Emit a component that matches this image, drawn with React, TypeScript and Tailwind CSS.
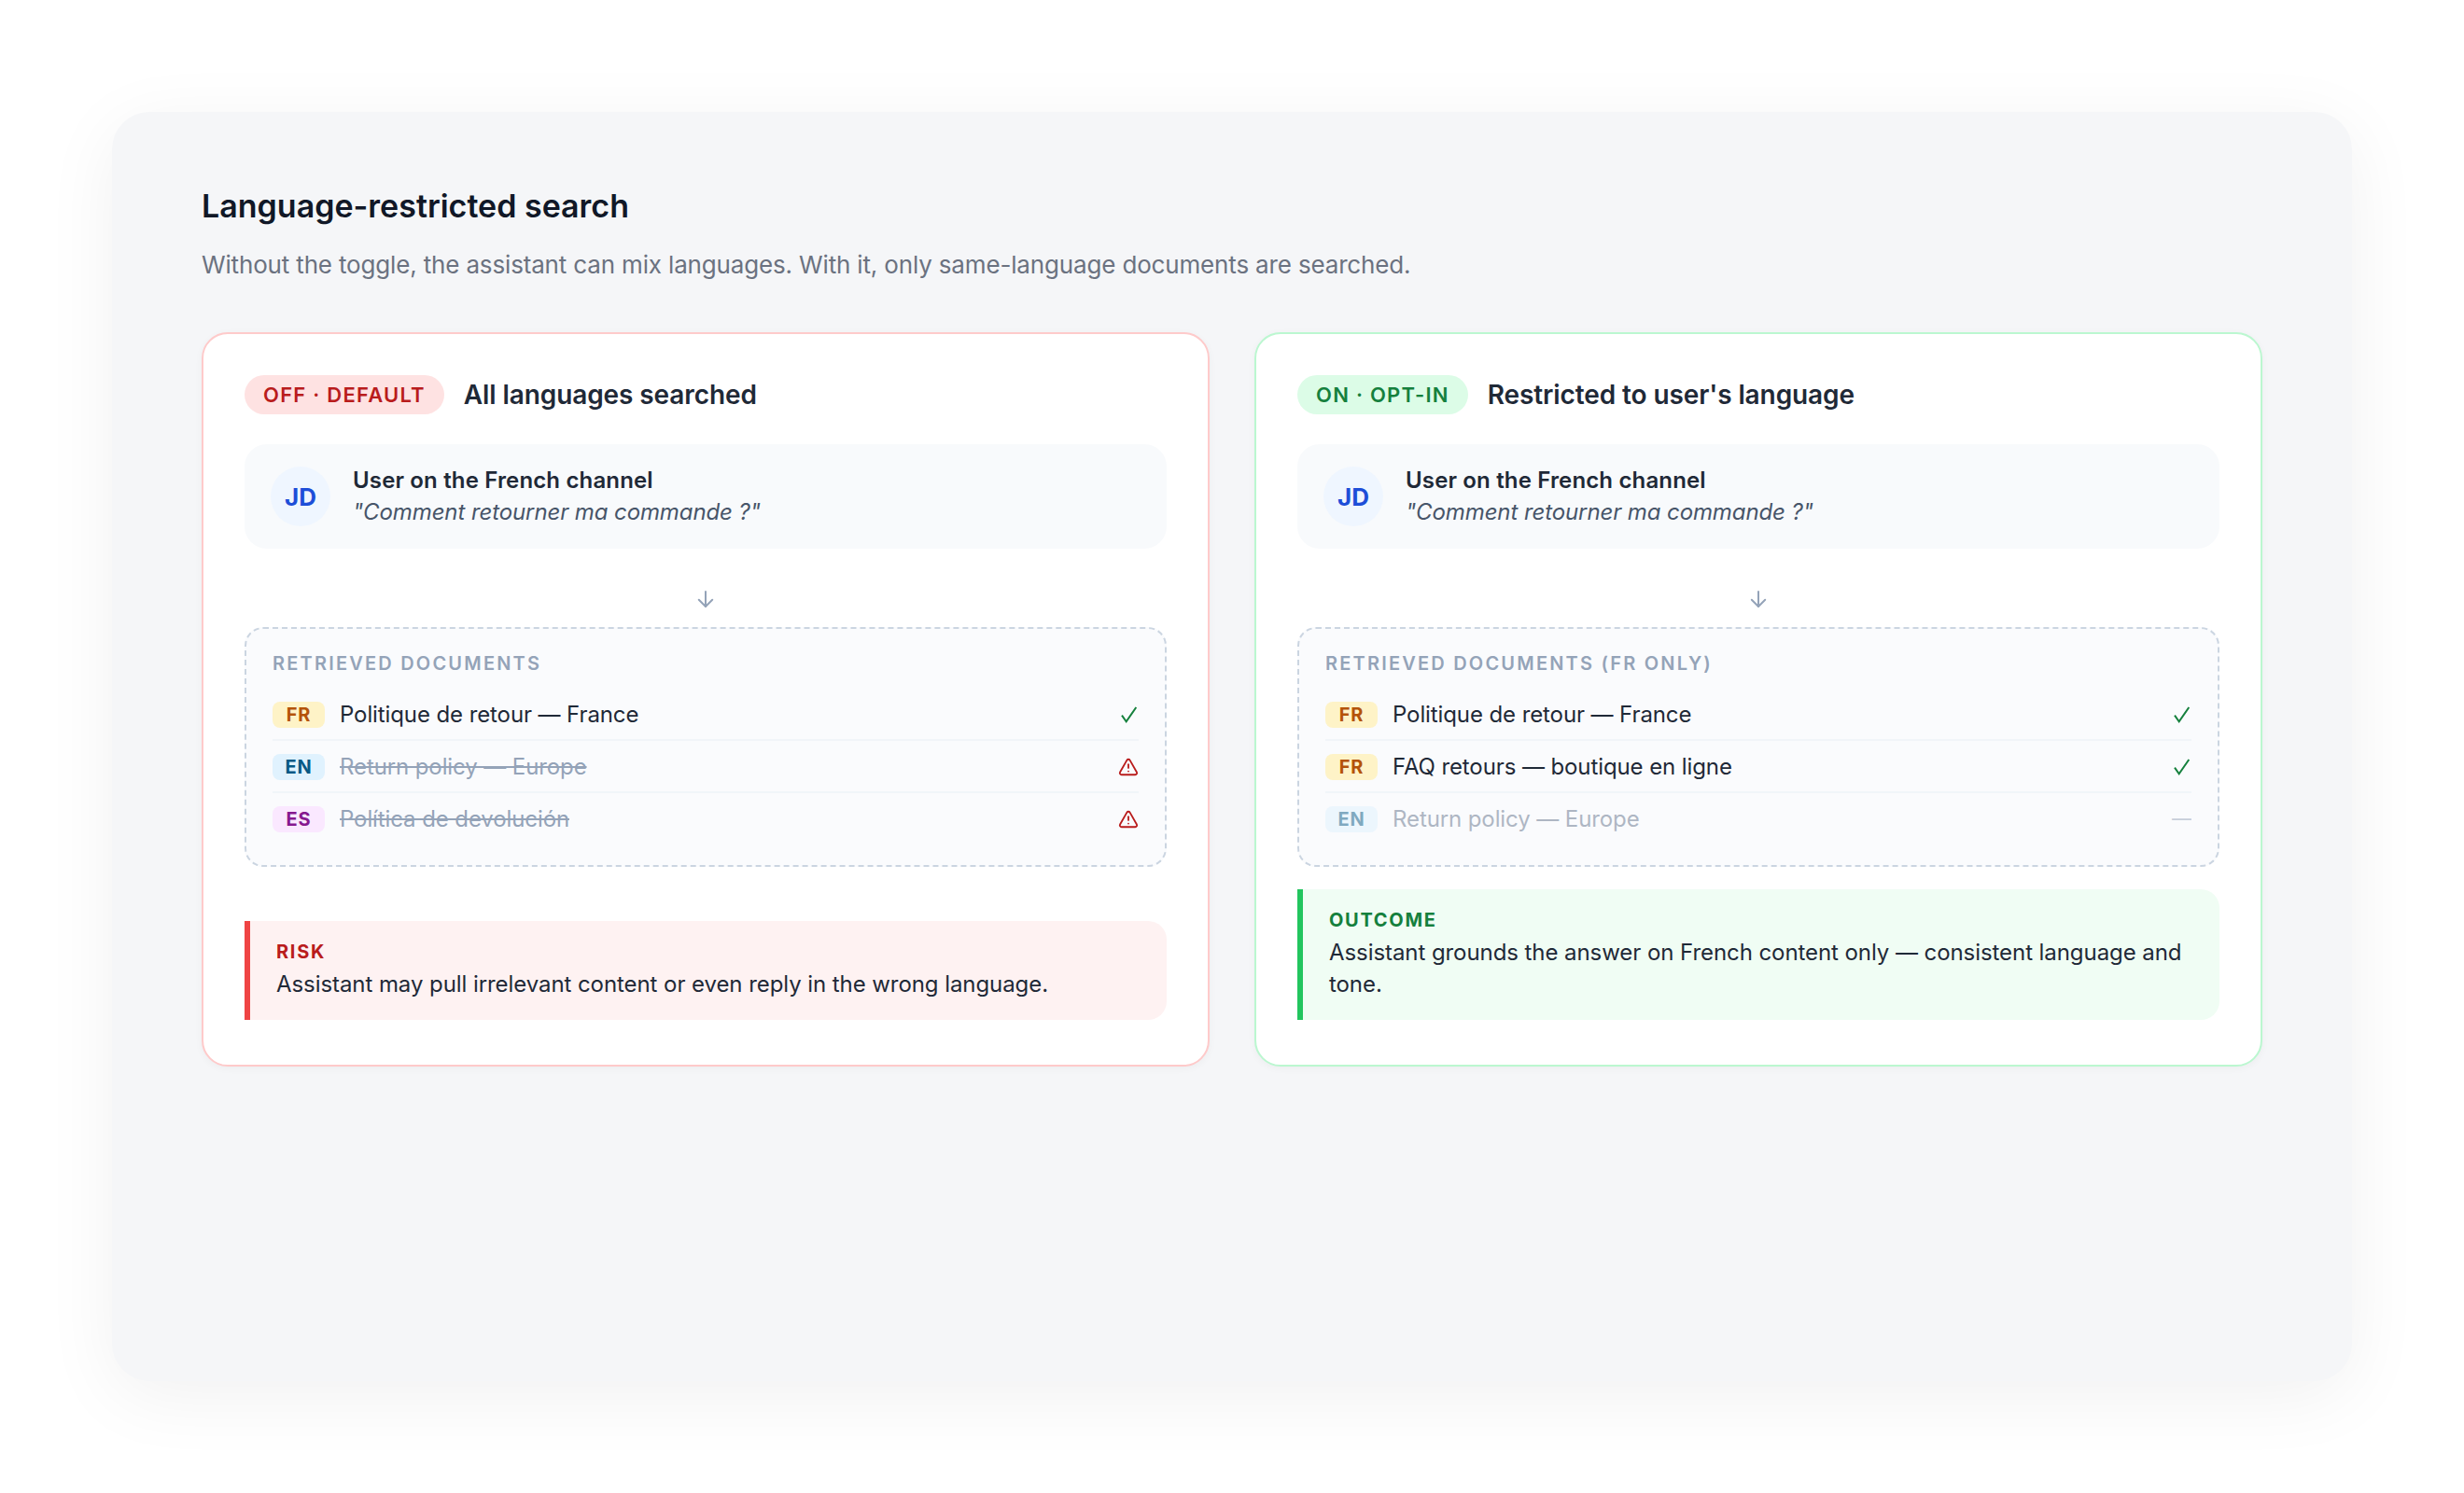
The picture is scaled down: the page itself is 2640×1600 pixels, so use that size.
import { ReactNode } from "react";

type Lang = "FR" | "EN" | "ES";

const langStyles: Record<Lang, string> = {
  FR: "bg-[#fef3c7] text-[#b45309]",
  EN: "bg-[#e0f2fe] text-[#075985]",
  ES: "bg-[#fae8ff] text-[#86198f]",
};

type Doc = { lang: Lang; title: string; state: "ok" | "bad" | "skip" };

function CheckIcon() {
  return (
    <svg width="22" height="22" viewBox="0 0 22 22" fill="none" stroke="#15803d" strokeWidth="2" strokeLinejoin="miter">
      <path d="M4 11.7 8.7 18.3 19.3 3" />
    </svg>
  );
}

function WarnIcon() {
  return (
    <svg width="22" height="22" viewBox="0 0 24 24" fill="none" stroke="#b91c1c" strokeWidth="2" strokeLinecap="round" strokeLinejoin="round">
      <path d="m21.73 18-8-14a2 2 0 0 0-3.48 0l-8 14A2 2 0 0 0 4 21h16a2 2 0 0 0 1.73-3" />
      <path d="M12 9v4" />
      <path d="M12 17h.01" />
    </svg>
  );
}

function DocRow({ doc, last }: { doc: Doc; last?: boolean }) {
  return (
    <div className={`flex items-center pt-[2px] ${last ? "h-[54px]" : "h-[56px] border-b-2 border-[#f1f5f9]"} ${doc.state === "skip" ? "opacity-50" : ""}`}>
      <span className={`flex h-[28px] w-[56px] items-center justify-center rounded-[8px] text-[20px] font-bold tracking-[0.8px] ${langStyles[doc.lang]}`}>
        {doc.lang}
      </span>
      <span className={`ml-[16px] flex-1 text-[24px] leading-[34px] tracking-[-0.1px] ${doc.state === "bad" ? "text-[#94a3b8] line-through" : "text-[#1f2937]"} ${doc.state === "skip" ? "text-[#64748b]" : ""}`}>
        {doc.title}
      </span>
      {doc.state === "ok" && <CheckIcon />}
      {doc.state === "bad" && <WarnIcon />}
      {doc.state === "skip" && <span className="text-[21px] leading-[34px] text-[#94a3b8]">—</span>}
    </div>
  );
}

function Card(props: {
  border: string;
  pill: string;
  pillText: string;
  title: string;
  docsLabel: string;
  docs: Doc[];
  callout: string;
  calloutLabelColor: string;
  calloutLabel: string;
  calloutText: ReactNode;
}) {
  return (
    <div className={`flex w-[1080px] flex-col rounded-[28px] border-2 bg-white px-[44px] pt-[44px] pb-[48px] shadow-[0_2px_8px_rgba(0,0,0,0.04)] ${props.border}`}>
      <div className="flex h-[42px] items-center gap-[21px]">
        <span className={`flex h-[42px] items-center rounded-full px-[20px] text-[22px] font-semibold tracking-[1.24px] ${props.pill}`}>
          {props.pillText}
        </span>
        <span className="text-[28px] font-semibold tracking-[-0.1px] text-[#1f2937]">{props.title}</span>
      </div>

      <div className="mt-[32px] flex h-[112px] items-center gap-[24px] rounded-[24px] bg-[#f8fafc] px-[28px]">
        <div className="flex h-[64px] w-[64px] items-center justify-center rounded-full bg-[#eff6ff] text-[26px] font-bold text-[#1d4ed8]">
          JD
        </div>
        <div className="text-[24px] leading-[34px]">
          <div className="font-semibold tracking-[0.15px] text-[#1f2937]">User on the French channel</div>
          <div className="italic tracking-[-0.1px] text-[#475569]">"Comment retourner ma commande ?"</div>
        </div>
      </div>

      <div className="flex h-[84px] items-center justify-center pt-[24px]">
        <svg width="18" height="20" viewBox="0 0 18 20" fill="none" stroke="#94a3b8" strokeWidth="2" strokeLinecap="round" strokeLinejoin="round">
          <path d="M9 2v16" />
          <path d="M1.8 10.8 9 18l7.2-7.2" />
        </svg>
      </div>

      <div className="rounded-[20px] border-2 border-dashed border-[#cbd5e1] bg-[#fafbfd] px-[28px] pt-[24px] pb-[23px]">
        <div className="mb-[14px] text-[20px] leading-[26px] font-semibold tracking-[2.2px] text-[#94a3b8]">{props.docsLabel}</div>
        {props.docs.map((d, i) => (
          <DocRow key={d.title} doc={d} last={i === props.docs.length - 1} />
        ))}
      </div>

      <div className="mt-auto pt-[24px]">
        <div className={`rounded-r-[20px] border-l-[6px] pt-[20px] pr-[28px] pb-[21px] pl-[28px] ${props.callout}`}>
          <div className={`text-[20px] leading-[27px] font-bold tracking-[1.7px] ${props.calloutLabelColor}`}>{props.calloutLabel}</div>
          <div className="mt-[4px] text-[24px] leading-[34px] tracking-[-0.07px] text-[#1f2937]">{props.calloutText}</div>
        </div>
      </div>
    </div>
  );
}

export default function App() {
  return (
    <div className="h-[1600px] w-[2640px] bg-white p-[120px] font-['Inter',sans-serif]">
      <div className="h-[1360px] rounded-[40px] bg-[#f5f6f8] px-[96px] pt-[79px] shadow-[0_16px_80px_rgba(0,0,0,0.06)]">
        <h1 className="text-[34px] leading-[44px] font-semibold text-[#111827]">Language-restricted search</h1>
        <p className="mt-[21px] text-[26px] leading-[40px] tracking-[-0.16px] text-[#6b7280]">
          Without the toggle, the assistant can mix languages. With it, only same-language documents are searched.
        </p>
        <div className="mt-[52px] flex gap-[48px]">
          <Card
            border="border-[#fecaca]"
            pill="bg-[#fee2e2] text-[#b91c1c]"
            pillText="OFF · DEFAULT"
            title="All languages searched"
            docsLabel="RETRIEVED DOCUMENTS"
            docs={[
              { lang: "FR", title: "Politique de retour — France", state: "ok" },
              { lang: "EN", title: "Return policy — Europe", state: "bad" },
              { lang: "ES", title: "Política de devolución", state: "bad" },
            ]}
            callout="border-[#ef4444] bg-[#fef2f2]"
            calloutLabelColor="text-[#b91c1c]"
            calloutLabel="RISK"
            calloutText="Assistant may pull irrelevant content or even reply in the wrong language."
          />
          <Card
            border="border-[#bbf7d0]"
            pill="bg-[#dcfce7] text-[#15803d]"
            pillText="ON · OPT-IN"
            title="Restricted to user's language"
            docsLabel="RETRIEVED DOCUMENTS (FR ONLY)"
            docs={[
              { lang: "FR", title: "Politique de retour — France", state: "ok" },
              { lang: "FR", title: "FAQ retours — boutique en ligne", state: "ok" },
              { lang: "EN", title: "Return policy — Europe", state: "skip" },
            ]}
            callout="border-[#22c55e] bg-[#f0fdf4]"
            calloutLabelColor="text-[#15803d]"
            calloutLabel="OUTCOME"
            calloutText="Assistant grounds the answer on French content only — consistent language and tone."
          />
        </div>
      </div>
    </div>
  );
}
